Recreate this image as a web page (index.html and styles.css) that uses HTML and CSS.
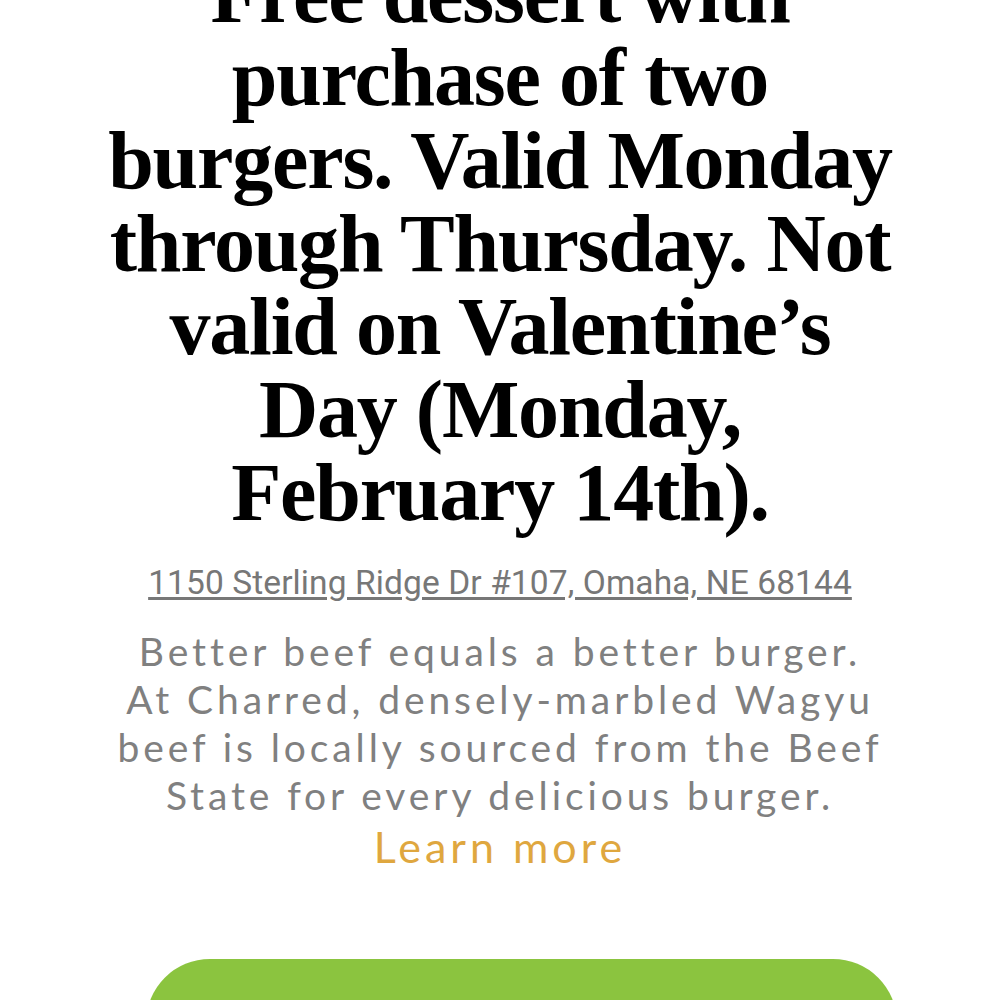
FILE: index.html
```html
<!DOCTYPE html>
<html lang="en">
<head>
<meta charset="utf-8">
<title>Charred</title>
<link rel="stylesheet" href="styles.css">
</head>
<body>
<main class="promo">
  <h1 class="promo-title">Free dessert with<br>purchase of two<br>burgers. Valid Monday<br>through Thursday. Not<br>valid on Valentine’s<br>Day (Monday,<br>February 14th).</h1>
  <a class="promo-address" href="#">1150 Sterling Ridge Dr #107, Omaha, NE 68144</a>
  <p class="promo-text">Better beef equals a better burger.<br>At Charred, densely-marbled Wagyu<br>beef is locally sourced from the Beef<br>State for every delicious burger.</p>
  <a class="promo-link" href="#">Learn more</a>
  <div class="promo-button-row">
    <button class="promo-button" type="button"></button>
  </div>
</main>
</body>
</html>
```
FILE: styles.css
```css
html, body {
  margin: 0;
  padding: 0;
  background: #ffffff;
}

.promo {
  display: flex;
  flex-direction: column;
  align-items: center;
  text-align: center;
}

.promo-title {
  margin: -47px 0 0;
  font-family: "Liberation Serif", serif;
  font-weight: 700;
  font-size: 82px;
  line-height: 83px;
  letter-spacing: -1.2px;
  color: #000000;
  white-space: nowrap;
}

.promo-address {
  margin-top: 29px;
  font-family: Roboto, "Liberation Sans", sans-serif;
  font-size: 33.5px;
  line-height: 40px;
  letter-spacing: 0.1px;
  color: #777777;
  text-decoration: underline;
  text-underline-offset: 3px;
}

.promo-text {
  margin: 24px 0 0;
  font-family: "Lato", sans-serif;
  font-size: 39px;
  line-height: 48px;
  letter-spacing: 3.9px;
  color: #808080;
}

.promo-link {
  margin-top: 3px;
  font-family: "Lato", sans-serif;
  font-size: 43px;
  line-height: 50px;
  letter-spacing: 4px;
  color: #dfa73f;
  text-decoration: none;
}

.promo-button-row {
  align-self: stretch;
  display: flex;
  padding-left: 146px;
  margin-top: 87px;
}

.promo-button {
  width: 751px;
  height: 128px;
  border: none;
  border-radius: 64px;
  background: #8bc43f;
}
```
